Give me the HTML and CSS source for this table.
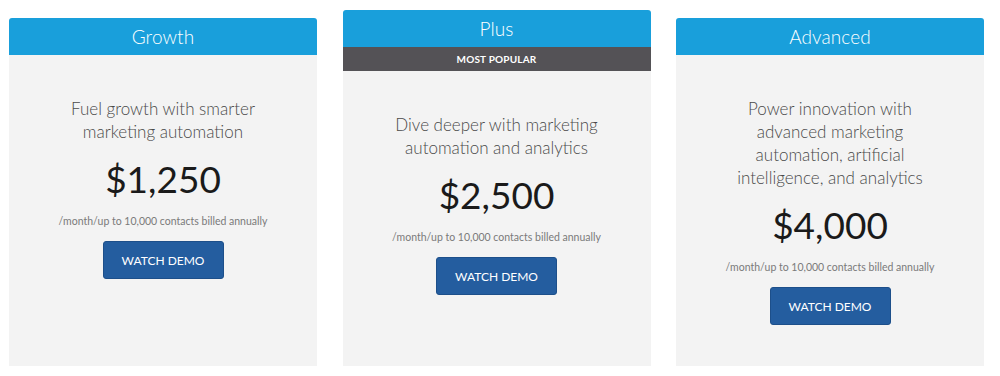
FILE: index.html
```html
<!DOCTYPE html>
<html>
<head>
<meta charset="utf-8">
<link rel="stylesheet" href="styles.css">
</head>
<body>
<div class="plans">
  <div class="card card-offset">
    <div class="card-head">Growth</div>
    <div class="card-body">
      <p class="desc">Fuel growth with smarter<br>marketing automation</p>
      <div class="price">$1,250</div>
      <div class="note">/month/up to 10,000 contacts billed annually</div>
      <a class="btn" href="#">WATCH DEMO</a>
    </div>
  </div>
  <div class="card">
    <div class="card-head">Plus</div>
    <div class="badge">MOST POPULAR</div>
    <div class="card-body">
      <p class="desc">Dive deeper with marketing<br>automation and analytics</p>
      <div class="price">$2,500</div>
      <div class="note">/month/up to 10,000 contacts billed annually</div>
      <a class="btn" href="#">WATCH DEMO</a>
    </div>
  </div>
  <div class="card card-offset">
    <div class="card-head">Advanced</div>
    <div class="card-body">
      <p class="desc">Power innovation with<br>advanced marketing<br>automation, artificial<br>intelligence, and analytics</p>
      <div class="price">$4,000</div>
      <div class="note">/month/up to 10,000 contacts billed annually</div>
      <a class="btn" href="#">WATCH DEMO</a>
    </div>
  </div>
</div>
</body>
</html>
```

FILE: styles.css
```css
html, body {
  margin: 0;
  padding: 0;
  background: #ffffff;
}
body {
  font-family: Lato, "Open Sans", "Liberation Sans", sans-serif;
}
.plans {
  display: flex;
  gap: 25.5px;
  padding: 10px 0 0 9px;
  height: 356px;
  box-sizing: content-box;
}
.card {
  width: 308px;
  display: flex;
  flex-direction: column;
}
.card-offset {
  margin-top: 8px;
}
.card-head {
  height: 37px;
  background: #199fdb;
  color: #ffffff;
  border-radius: 3px 3px 0 0;
  font-size: 19px;
  font-weight: 300;
  display: flex;
  align-items: center;
  justify-content: center;
  letter-spacing: 0.1px;
}
.badge {
  height: 24px;
  background: #545256;
  color: #ffffff;
  font-size: 10px;
  font-weight: 700;
  display: flex;
  align-items: center;
  justify-content: center;
  letter-spacing: 0.2px;
}
.card-body {
  flex: 1;
  background: #f3f3f3;
  display: flex;
  flex-direction: column;
  align-items: center;
  padding-top: 42px;
  text-align: center;
}
.desc {
  margin: 0;
  font-size: 17px;
  line-height: 23px;
  font-weight: 300;
  color: #4a4a4a;
}
.price {
  margin-top: 14px;
  font-size: 37px;
  line-height: 44px;
  font-weight: 400;
  color: #1a1a1a;
}
.note {
  margin-top: 12px;
  font-size: 10.5px;
  line-height: 16px;
  color: #7a7a7a;
  font-weight: 400;
}
.btn {
  margin-top: 12px;
  width: 121px;
  height: 38px;
  box-sizing: border-box;
  background: #245d9f;
  border: 1px solid #1d4f8a;
  border-radius: 3px;
  color: #ffffff;
  text-decoration: none;
  font-size: 12px;
  font-weight: 400;
  display: flex;
  align-items: center;
  justify-content: center;
}
```
